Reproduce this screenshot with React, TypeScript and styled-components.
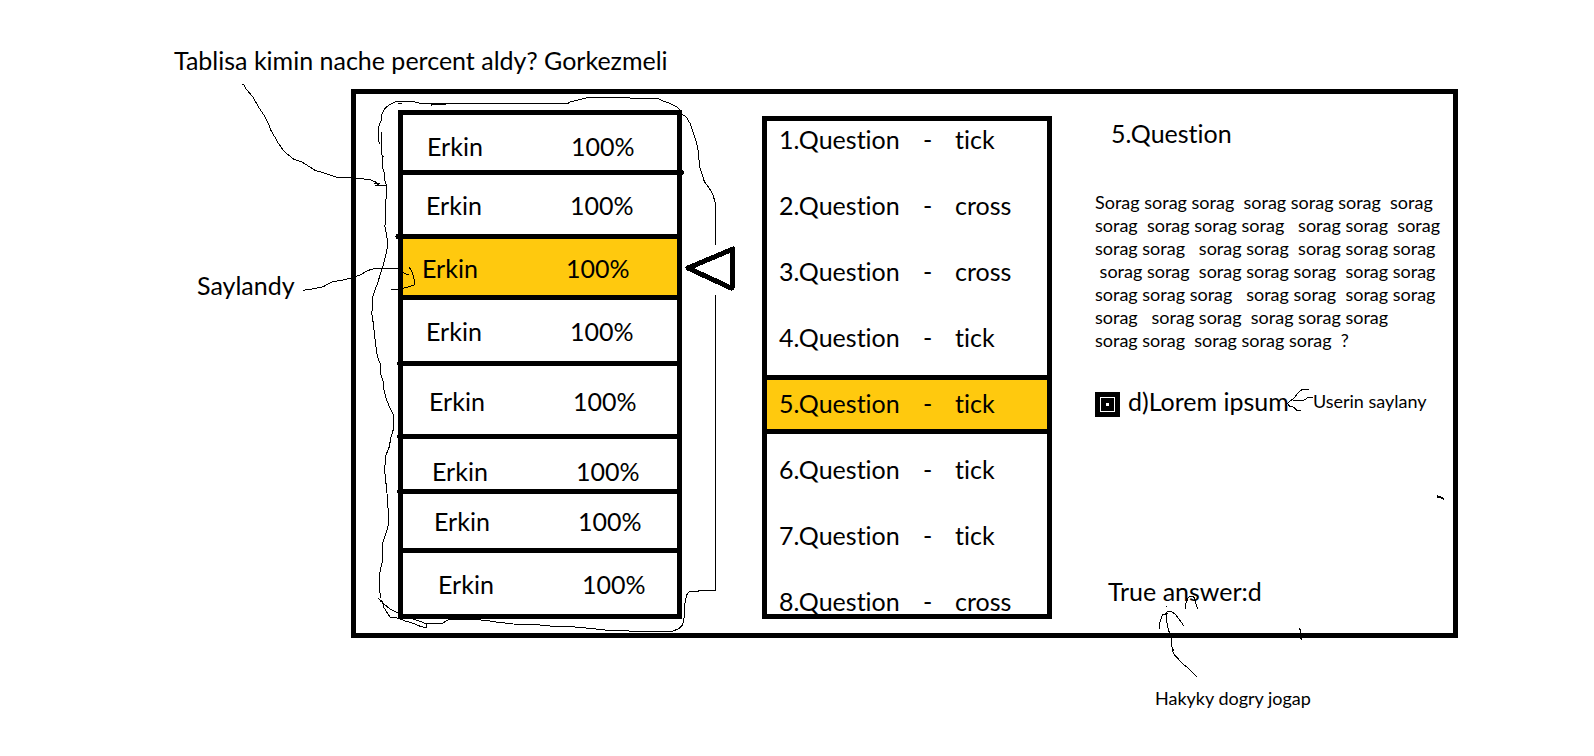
import React from 'react';
import styled, { createGlobalStyle, css } from 'styled-components';

const INK = '#000000';
const GOLD = '#ffc90e';

const GlobalStyle = createGlobalStyle`
  *, *::before, *::after { box-sizing: border-box; }
  body {
    margin: 0;
    background: #ffffff;
    color: ${INK};
    font-family: Lato, "Liberation Sans", sans-serif;
    font-variant-ligatures: none;
  }
`;

const bigText = css`
  font-size: 25px;
  font-weight: 400;
  line-height: 40px;
  white-space: nowrap;
`;

const smallText = css`
  font-size: 18px;
  font-weight: 400;
  line-height: 23px;
  white-space: pre;
`;

const Page = styled.div`
  position: relative;
  padding: 40px 0;
`;

const Heading = styled.h1`
  ${bigText}
  margin: 0 0 9px;
  padding-left: 174px;
`;

const Board = styled.main`
  display: grid;
  grid-template-columns: 351px minmax(1107px, 1fr) 136px;
`;

const SelectedNote = styled.p`
  ${bigText}
  margin: 176px 0 0;
  padding-left: 197px;
`;

const Panel = styled.section`
  display: flex;
  align-items: stretch;
  padding: 16px 20px 14px 42px;
  border: 5px solid ${INK};
`;

const ScoreTable = styled.table`
  flex: none;
  width: 284px;
  table-layout: fixed;
  border: 5px solid ${INK};
  border-spacing: 0;
`;

const ScoreRow = styled.tr<{ $height: number; $selected: boolean }>`
  height: ${(p) => p.$height}px;
  background: ${(p) => (p.$selected ? GOLD : 'transparent')};

  &:not(:last-child) > td {
    border-bottom: 5px solid ${INK};
  }
`;

const ScoreCell = styled.td<{ $indent: number; $drop: number }>`
  ${bigText}
  line-height: 32px;
  padding: ${(p) => p.$drop}px 0 0 ${(p) => p.$indent}px;
  vertical-align: middle;

  &:first-child { width: 144px; }
`;

const QuestionList = styled.ul`
  flex: none;
  align-self: flex-end;
  display: flex;
  flex-direction: column;
  gap: 30px;
  width: 290px;
  margin: 0 0 0 80px;
  padding: 0;
  border: 5px solid ${INK};
  overflow: hidden;
  list-style: none;
`;

const QuestionItem = styled.li<{ $current: boolean }>`
  ${bigText}
  line-height: 36px;
  display: grid;
  grid-template-columns: 144px 32px 1fr;
  padding-left: 12px;

  &:last-child { height: 31px; }

  ${(p) =>
    p.$current &&
    css`
      margin: -10px 0 -13px;
      padding-top: 5px;
      padding-bottom: 8px;
      border: solid ${INK};
      border-width: 5px 0;
      background: ${GOLD};
    `}
`;

const Detail = styled.article`
  flex: 1;
  display: flex;
  flex-direction: column;
  margin-left: 43px;
`;

const DetailTitle = styled.h2`
  ${bigText}
  line-height: 46px;
  margin: 0 0 35px;
  padding-left: 16px;
`;

const QuestionText = styled.p`
  ${smallText}
  margin: 0 0 29px;
`;

const Choice = styled.div`
  display: flex;
  align-items: center;
`;

const ChoiceLabel = styled.label`
  ${bigText}
  display: flex;
  align-items: flex-end;
  gap: 8px;
`;

const ChoiceBox = styled.input`
  appearance: none;
  display: grid;
  place-items: center;
  width: 25px;
  height: 25px;
  margin: 0 0 4px;
  border: 5px solid ${INK};
  outline: 0;
  background: ${INK};
  box-shadow: inset 0 0 0 1px #ffffff;

  &:checked::before {
    content: '';
    width: 3px;
    height: 3px;
    background: #ffffff;
  }
`;

const ChoiceNote = styled.span`
  ${smallText}
  margin-left: 24px;
`;

const TrueAnswer = styled.p`
  ${bigText}
  margin: auto 0 8px;
  padding-left: 13px;
`;

const Footnote = styled.p`
  ${smallText}
  margin: 49px 0 0;
  padding-left: 1155px;
`;

const Ink = styled.svg`
  position: absolute;
  top: 0;
  left: 0;
  width: 1px;
  height: 1px;
  overflow: visible;
  pointer-events: none;
  fill: none;
  stroke: ${INK};
  stroke-width: 1;

  path { vector-effect: non-scaling-stroke; }
`;

const scores = [
  { height: 60, indent: 24, drop: 6 },
  { height: 64, indent: 23, drop: 0 },
  { height: 61, indent: 19, drop: 2 },
  { height: 66, indent: 23, drop: 0 },
  { height: 73, indent: 26, drop: 2 },
  { height: 55, indent: 29, drop: 14 },
  { height: 59, indent: 31, drop: 0 },
  { height: 61, indent: 35, drop: 0 },
];
const selectedScore = 2;

const results = ['tick', 'cross', 'cross', 'tick', 'tick', 'tick', 'tick', 'cross'];
const currentQuestion = 5;

const questionText = [
  'Sorag sorag sorag  sorag sorag sorag  sorag',
  'sorag  sorag sorag sorag   sorag sorag  sorag',
  'sorag sorag   sorag sorag  sorag sorag sorag',
  ' sorag sorag  sorag sorag sorag  sorag sorag',
  'sorag sorag sorag   sorag sorag  sorag sorag',
  'sorag   sorag sorag  sorag sorag sorag',
  'sorag sorag  sorag sorag sorag  ?',
].join('\n');

/* Freehand strokes; each group is drawn at three units to the pixel. */
function Annotations() {
  const third = 'scale(0.333333)';
  return (
    <Ink aria-hidden="true" shapeRendering="crispEdges">
      {/* heading arrow and the upper left of the loop */}
      <g transform={`translate(230 75) ${third}`}>
        <path d="M37 28L42 29 47 40 70 68 85 95 103 122 119 154 122 165 135 187 145 205 163 230 193 254 212 259 235 273 255 286 280 293 297 299 322 307H368L378 309 420 314 435 320 441 326" />
        <path d="M435 331H468M433 325H450M436 321L448 330M440 328h8" />
        <path d="M510 79L495 81 478 89 463 102 455 118 454 135 446 155 445 185 448 208" />
        <path d="M454 170L455 220 457 260 458 278 462 290 464 315 469 330 468 375 466 390M459 244h4" />
      </g>
      {/* top and right of the loop */}
      <g transform={`translate(370 90) ${third}`}>
        <path d="M84 40h12M84 35H130L148 39 170 41H592L600 36 625 30 655 22H772L785 25H862L880 33 895 38 905 43 922 52 932 62" />
        <path d="M182 43H228M184 48h3" />
        <path d="M935 72L948 80 960 100 970 130 980 160 985 185 987 210 990 235 998 258 1003 275 1018 295 1028 312 1035 335 1037 350V465M1037 614V870" />
      </g>
      {/* left of the loop and the arrow into the selected row */}
      <g transform={`translate(290 200) ${third}`}>
        <path d="M286 0L285 80 288 95 292 120 292 143 285 175 277 205 270 225 265 243 257 265 248 290 247 325 245 340 250 370 253 400 258 440 262 470 270 490 273 525 280 545" />
        <path d="M39 271L60 268 100 260 125 246 158 240 192 232 210 225 235 211 252 206H325" />
        <path d="M339 217L350 223h7M358 202L368 220 374 245 373 255 350 262 330 268H303" />
      </g>
      {/* bottom of the loop */}
      <g transform={`translate(350 380) ${third}`}>
        <path d="M100 4L102 30 108 55 120 85 130 103 131 145 122 175 118 200 108 225 106 250 103 265 107 300 111 340 112 370 116 400 115 435 108 460 98 488 97 545 90 575 88 620 92 655" />
        <path d="M1097 0V631L1060 632 1018 635 1010 645 1005 670 1003 710 998 735 985 747 965 754H860L765 750 720 745 665 740 600 738 570 735 490 732 430 725 410 721 355 718H298L290 722 278 730H225L205 722 190 717" />
        <path d="M85 655L92 663 105 675 125 690 147 700M90 660L98 665 100 680 120 711 147 715 165 723 190 730 213 740 230 743V732" />
      </g>
      {/* chosen answer arrow and stray mark */}
      <g transform={`translate(1070 370) ${third}`}>
        <path d="M716 58H697L685 68 672 84 652 100 658 108 670 111 680 121H692M668 92H700L713 83H728" />
        <path strokeWidth="2" d="M1101 379L1112 382 1122 387" />
      </g>
      {/* true answer arrow */}
      <g transform={`translate(1130 580) ${third}`}>
        <path d="M88 147L90 125 98 104 107 102h8M105 102L112 95H125L135 102 145 115 155 128 161 138M108 100L109 120 113 140 118 158 124 178 127 210 133 225 145 237 158 252 175 264 190 280 200 290M127 203L132 213M109 78v4" />
        <path d="M166 86L168 70 175 52 183 48 193 52 197 68 203 87M508 145L511 150V172L515 179" />
      </g>
      {/* row pointer and the overshooting line ends */}
      <g strokeLinecap="round" strokeLinejoin="round" strokeWidth="5">
        <path d="M732 288V251M733 249L688 268 731 288" />
        <path d="M680 172.500H681.500M398 236.500H400M399.500 363.500H401M399.500 436.500H401M399.500 491.500H401" />
      </g>
    </Ink>
  );
}

export default function App() {
  return (
    <Page>
      <GlobalStyle />
      <Heading>Tablisa kimin nache percent aldy? Gorkezmeli</Heading>
      <Board>
        <SelectedNote>Saylandy</SelectedNote>
        <Panel>
          <ScoreTable>
            <tbody>
              {scores.map((s, i) => (
                <ScoreRow key={i} $height={s.height} $selected={i === selectedScore}>
                  <ScoreCell $indent={s.indent} $drop={s.drop}>Erkin</ScoreCell>
                  <ScoreCell $indent={s.indent} $drop={s.drop}>100%</ScoreCell>
                </ScoreRow>
              ))}
            </tbody>
          </ScoreTable>
          <QuestionList>
            {results.map((result, i) => (
              <QuestionItem key={i} $current={i + 1 === currentQuestion}>
                <span>{i + 1}.Question</span>
                <span>-</span>
                <span>{result}</span>
              </QuestionItem>
            ))}
          </QuestionList>
          <Detail>
            <DetailTitle>5.Question</DetailTitle>
            <QuestionText>{questionText}</QuestionText>
            <Choice>
              <ChoiceLabel>
                <ChoiceBox type="checkbox" defaultChecked />
                d)Lorem ipsum
              </ChoiceLabel>
              <ChoiceNote>Userin saylany</ChoiceNote>
            </Choice>
            <TrueAnswer>True answer:d</TrueAnswer>
          </Detail>
        </Panel>
      </Board>
      <Footnote>Hakyky dogry jogap</Footnote>
      <Annotations />
    </Page>
  );
}
